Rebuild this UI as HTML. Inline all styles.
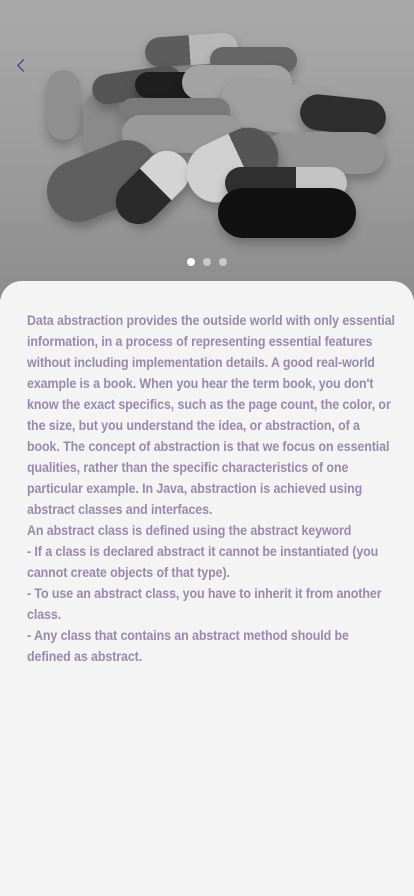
<!DOCTYPE html>
<html><head><meta charset="utf-8"><style>
body{margin:0;width:414px;height:896px;overflow:hidden;background:#f4f4f4;font-family:"Liberation Sans",sans-serif;position:relative}
.hero{position:absolute;left:0;top:0;width:414px;height:300px;background:linear-gradient(180deg,#a9a9a9 0%,#9a9a9a 60%,#8c8c8c 100%);overflow:hidden}
.p{position:absolute;border-radius:999px;box-shadow:0 6px 10px rgba(0,0,0,.25)}
.card{position:absolute;left:0;top:281px;width:414px;height:615px;background:#f4f4f4;border-radius:22px 22px 0 0}
.txt{position:absolute;left:27px;top:311px;width:420px;font-size:14.2px;line-height:21px;font-weight:bold;color:#9a89ad;letter-spacing:-0.1px;transform:scaleX(0.877);transform-origin:0 0}
.dots{position:absolute;top:258px;left:187px;display:flex;gap:8px}
.dots span{width:8px;height:8px;border-radius:50%;background:#c8c8c8}
.dots span:first-child{background:#fff}
</style></head><body>
<div class="hero">
<div class="p" style="left:145px;top:35px;width:93px;height:30px;background:linear-gradient(90deg,#5c5c5c 48%,#b8b8b8 48%);transform:rotate(-4deg)"></div>
<div class="p" style="left:210px;top:47px;width:87px;height:26px;background:#666"></div>
<div class="p" style="left:47px;top:70px;width:33px;height:70px;background:#8f8f8f"></div>
<div class="p" style="left:83px;top:92px;width:36px;height:65px;background:#8a8a8a"></div>
<div class="p" style="left:92px;top:70px;width:90px;height:30px;background:#555;transform:rotate(-8deg)"></div>
<div class="p" style="left:135px;top:72px;width:80px;height:26px;background:#1e1e1e"></div>
<div class="p" style="left:182px;top:65px;width:110px;height:35px;background:#a3a3a3"></div>
<div class="p" style="left:220px;top:83px;width:125px;height:50px;background:#9f9f9f;transform:rotate(8deg)"></div>
<div class="p" style="left:300px;top:97px;width:86px;height:36px;background:#2e2e2e;transform:rotate(6deg)"></div>
<div class="p" style="left:120px;top:98px;width:110px;height:25px;background:#7a7a7a"></div>
<div class="p" style="left:122px;top:115px;width:120px;height:38px;background:#999"></div>
<div class="p" style="left:265px;top:132px;width:120px;height:42px;background:#939393"></div>
<div class="p" style="left:45px;top:150px;width:115px;height:62px;background:#5f5f5f;transform:rotate(-22deg)"></div>
<div class="p" style="left:110px;top:165px;width:85px;height:45px;background:linear-gradient(90deg,#2a2a2a 55%,#d4d4d4 55%);transform:rotate(-45deg)"></div>
<div class="p" style="left:185px;top:135px;width:95px;height:60px;background:linear-gradient(90deg,#d0d0d0 60%,#555 60%);transform:rotate(-25deg)"></div>
<div class="p" style="left:225px;top:167px;width:122px;height:32px;background:linear-gradient(90deg,#2f2f2f 58%,#c4c4c4 58%)"></div>
<div class="p" style="left:218px;top:188px;width:138px;height:50px;background:#111"></div>
<div style="position:absolute;left:19px;top:61px;width:8px;height:8px;border-left:1.6px solid #3a2a8a;border-bottom:1.6px solid #3a2a8a;transform:rotate(45deg)"></div>
<div class="dots"><span></span><span></span><span></span></div>
</div>
<div class="card"></div>
<div class="txt">Data abstraction provides the outside world with only essential information, in a process of representing essential features without including implementation details. A good real-world example is a book. When you hear the term book, you don't know the exact specifics, such as the page count, the color, or the size, but you understand the idea, or abstraction, of a book. The concept of abstraction is that we focus on essential qualities, rather than the specific characteristics of one particular example. In Java, abstraction is achieved using abstract classes and interfaces.<br>An abstract class is defined using the abstract keyword<br>- If a class is declared abstract it cannot be instantiated (you cannot create objects of that type).<br>- To use an abstract class, you have to inherit it from another class.<br>- Any class that contains an abstract method should be defined as abstract.</div>
</body></html>
